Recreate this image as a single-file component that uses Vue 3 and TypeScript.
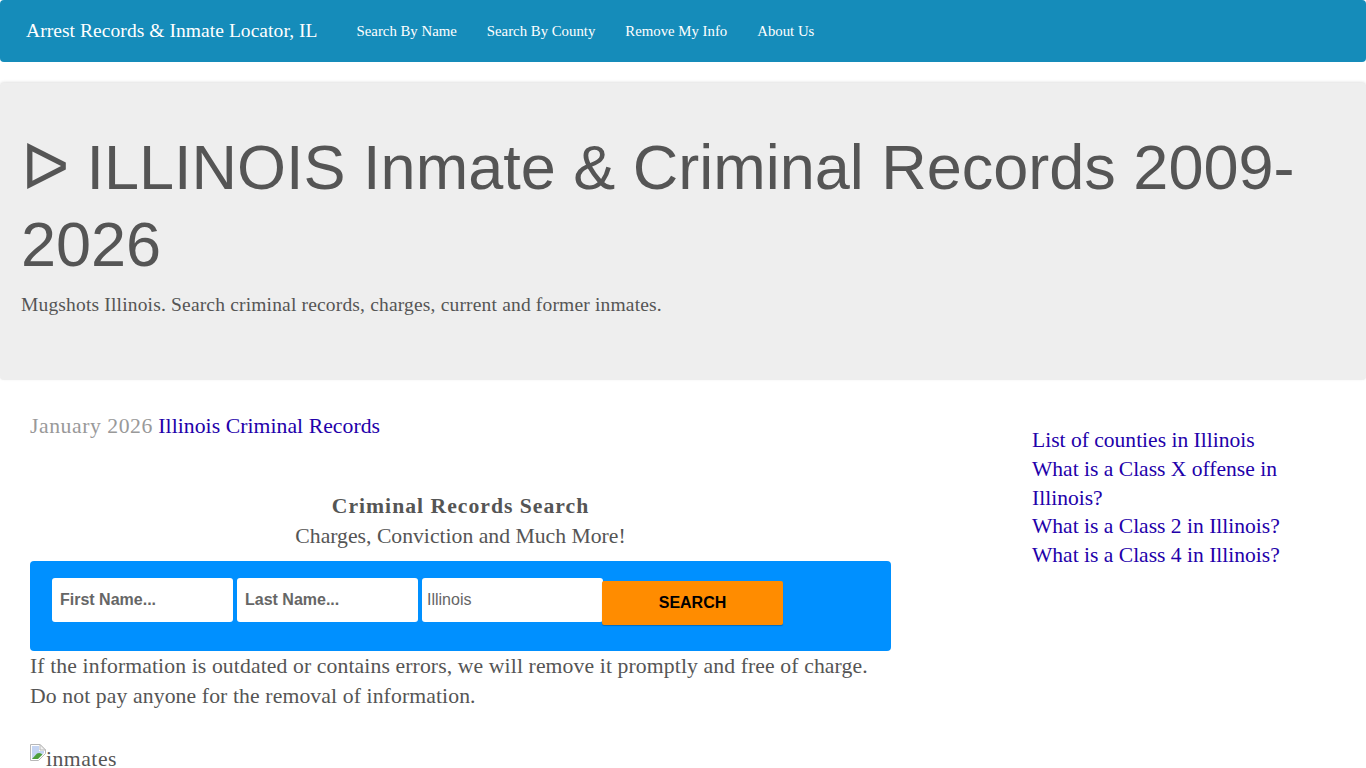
<script setup lang="ts">
const navLinks = ['Search By Name', 'Search By County', 'Remove My Info', 'About Us']
const sideLinks = [
  'List of counties in Illinois',
  'What is a Class X offense in Illinois?',
  'What is a Class 2 in Illinois?',
  'What is a Class 4 in Illinois?',
]
</script>

<template>
  <div class="page">
    <nav class="navbar">
      <a class="brand" href="#">Arrest Records &amp; Inmate Locator, IL</a>
      <ul class="nav-links">
        <li v-for="link in navLinks" :key="link"><a href="#">{{ link }}</a></li>
      </ul>
    </nav>

    <header class="jumbotron">
      <h1><span class="arrow">ᐅ</span> ILLINOIS Inmate &amp; Criminal Records 2009-2026</h1>
      <p>Mugshots Illinois. Search criminal records, charges, current and former inmates.</p>
    </header>

    <div class="content">
      <main class="main">
        <p class="date"><span>January 2026</span> <a href="#">Illinois Criminal Records</a></p>
        <div class="search-head">
          <strong>Criminal Records Search</strong>
          <div>Charges, Conviction and Much More!</div>
        </div>
        <form class="search-form" @submit.prevent>
          <input class="field" type="text" placeholder="First Name..." />
          <input class="field" type="text" placeholder="Last Name..." />
          <input class="field state" type="text" value="Illinois" />
          <button class="submit" type="submit">SEARCH</button>
        </form>
        <p class="note">
          If the information is outdated or contains errors, we will remove it promptly and free of charge.<br />
          Do not pay anyone for the removal of information.
        </p>
        <div class="broken">
          <svg width="16" height="17" viewBox="0 0 16 17">
            <path d="M.5 .5H10L15.5 6V9.5L8.5 16.5H.5Z" fill="#fff" stroke="#b8b8b8" />
            <path d="M10 .5V6H15.5Z" fill="#f2f2f2" stroke="#b8b8b8" />
            <path d="M2 2H9V7H14V9L7.5 15H2Z" fill="#c4d4f2" />
            <path d="M2 15L7 9.5Q10 8 12.5 10.5L8 15Z" fill="#4d9f3a" />
          </svg><span>inmates</span>
        </div>
      </main>
      <aside class="side">
        <a v-for="link in sideLinks" :key="link" href="#">{{ link }}</a>
      </aside>
    </div>
  </div>
</template>

<style>
html,
body {
  margin: 0;
  background: #fff;
}
</style>

<style scoped>
.page {
  height: 768px;
  overflow: hidden;
  font-family: "Liberation Serif", "Times New Roman", serif;
  color: #555;
}

.navbar {
  display: flex;
  align-items: center;
  height: 62px;
  background: #158cba;
  border-radius: 4px;
  padding-left: 26px;
}

.brand {
  color: #fff;
  text-decoration: none;
  font-size: 19.5px;
  letter-spacing: 0.06px;
  white-space: nowrap;
}

.nav-links {
  display: flex;
  gap: 30px;
  list-style: none;
  margin: 0 0 0 39px;
  padding: 0;
}

.nav-links a {
  color: #fff;
  text-decoration: none;
  font-size: 14.8px;
}

.jumbotron {
  margin-top: 21px;
  height: 297px;
  box-sizing: border-box;
  padding: 46px 21px 0;
  background: #eee;
  border-radius: 4px;
  box-shadow: 0 -1px 3px rgba(0, 0, 0, 0.12);
}

.jumbotron h1 {
  margin: 0;
  font: 400 63px/77px "Liberation Sans", Arial, sans-serif;
  color: #555;
}

.arrow {
  display: inline-block;
  line-height: 40px;
}

.jumbotron p {
  margin: 9px 0 0;
  font-size: 19.5px;
  letter-spacing: 0.17px;
  line-height: 26px;
}

.content {
  display: grid;
  grid-template-columns: 891px 1fr;
  column-gap: 141px;
}

.main {
  padding: 31px 0 0 30px;
  font-size: 21.7px;
}

.main a,
.side a {
  color: #2200aa;
  text-decoration: none;
}

.date {
  margin: 0;
  line-height: 30px;
  letter-spacing: 0.05px;
}

.date span {
  color: #999;
  letter-spacing: 0.55px;
}

.search-head {
  margin-top: 50px;
  text-align: center;
  line-height: 30px;
}

.search-head strong {
  letter-spacing: 1px;
}

.search-form {
  display: flex;
  align-items: flex-start;
  gap: 4px;
  height: 90px;
  box-sizing: border-box;
  margin-top: 10px;
  padding: 17px 22px 0;
  background: #0090ff;
  border-radius: 4px;
}

.field {
  width: 181px;
  height: 44px;
  box-sizing: border-box;
  padding: 0 8px;
  border: 0;
  border-radius: 3px;
  background: #fff;
  font: 700 16px "Liberation Sans", Arial, sans-serif;
  color: #666;
}

.field::placeholder {
  color: #666;
  opacity: 1;
}

.state {
  padding: 0 5px;
  font-weight: 400;
}

.submit {
  width: 181px;
  height: 44px;
  margin: 3px 0 0 -5px;
  border: 0;
  border-radius: 2px;
  background: #ff8c00;
  color: #000;
  font: 700 16px "Liberation Sans", Arial, sans-serif;
  box-shadow: 0 1px 1px rgba(0, 0, 0, 0.25);
}

.note {
  margin: 0;
  line-height: 30px;
  letter-spacing: 0.11px;
}

.broken {
  margin-top: 33px;
  line-height: 30px;
  letter-spacing: 0.5px;
}

.broken svg {
  vertical-align: 5px;
}

.side {
  display: flex;
  flex-direction: column;
  padding-top: 46px;
  font-size: 21.55px;
  line-height: 28.8px;
  width: 260px;
}
</style>
